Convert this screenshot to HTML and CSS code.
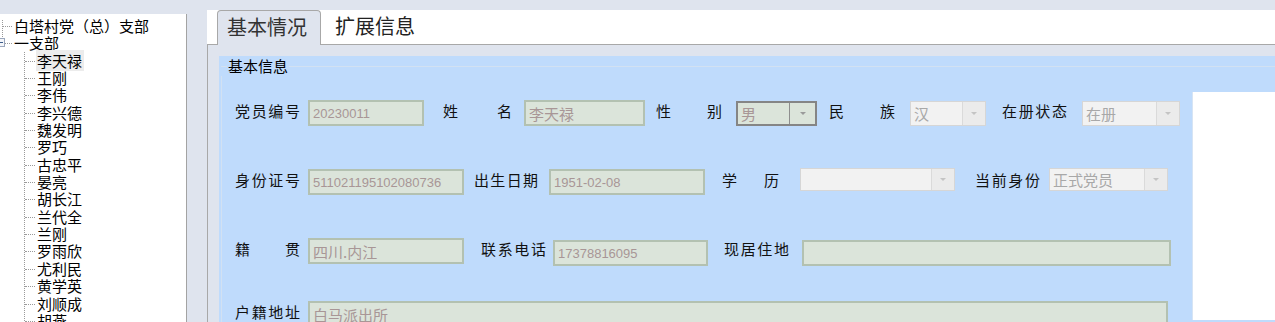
FILE: index.html
```html
<!DOCTYPE html>
<html lang="zh-CN">
<head>
<meta charset="utf-8">
<title>党员信息</title>
<link rel="stylesheet" href="styles.css">
</head>
<body>
<div class="app">
  <aside class="tree-wrap">
    <div class="tree">
      <div class="root-list">
        <div class="node root">白塔村党（总）支部</div>
        <div class="node root open"><span class="minus"></span>一支部</div>
      </div>
      <div class="children">
        <div class="node child"><span class="sel">李天禄</span></div>
        <div class="node child">王刚</div>
        <div class="node child">李伟</div>
        <div class="node child">李兴德</div>
        <div class="node child">魏发明</div>
        <div class="node child">罗巧</div>
        <div class="node child">古忠平</div>
        <div class="node child">晏亮</div>
        <div class="node child">胡长江</div>
        <div class="node child">兰代全</div>
        <div class="node child">兰刚</div>
        <div class="node child">罗雨欣</div>
        <div class="node child">尤利民</div>
        <div class="node child">黄学英</div>
        <div class="node child">刘顺成</div>
        <div class="node child">胡燕</div>
      </div>
    </div>
  </aside>
  <main class="main">
    <div class="tabs">
      <div class="tab active">基本情况</div>
      <div class="tab">扩展信息</div>
    </div>
    <div class="tab-body">
      <section class="group">
        <div class="group-title"><span class="gline short"></span><span class="gtext">基本信息</span><span class="gline"></span></div>
        <div class="group-body">
          <div class="form">
            <div class="row r1">
              <div class="lbl w65"><span>党</span><span>员</span><span>编</span><span>号</span></div>
              <div class="fld num ml8 w116">20230011</div>
              <div class="lbl w69 ml19"><span>姓</span><span>名</span></div>
              <div class="fld cjk ml12 w121">李天禄</div>
              <div class="lbl w66 ml11"><span>性</span><span>别</span></div>
              <div class="sel-box active ml14 w81"><span class="sv cjk">男</span><span class="btn"><span class="arrow"></span></span></div>
              <div class="lbl w66 ml12"><span>民</span><span>族</span></div>
              <div class="sel-box dis ml15 w76"><span class="sv cjk">汉</span><span class="btn"><span class="arrow"></span></span></div>
              <div class="lbl w65 ml16"><span>在</span><span>册</span><span>状</span><span>态</span></div>
              <div class="sel-box dis ml15 w98"><span class="sv cjk">在册</span><span class="btn"><span class="arrow"></span></span></div>
            </div>
            <div class="row r2">
              <div class="lbl w65"><span>身</span><span>份</span><span>证</span><span>号</span></div>
              <div class="fld num ml8 w156">511021195102080736</div>
              <div class="lbl w64 ml10"><span>出</span><span>生</span><span>日</span><span>期</span></div>
              <div class="fld num ml11 w156">1951-02-08</div>
              <div class="lbl w57 ml17"><span>学</span><span>历</span></div>
              <div class="sel-box dis short ml21 w155"><span class="sv cjk"></span><span class="btn"><span class="arrow"></span></span></div>
              <div class="lbl w65 ml20"><span>当</span><span>前</span><span>身</span><span>份</span></div>
              <div class="sel-box dis short ml9 w119"><span class="sv cjk">正式党员</span><span class="btn"><span class="arrow"></span></span></div>
            </div>
            <div class="row r3">
              <div class="lbl w65"><span>籍</span><span>贯</span></div>
              <div class="fld cjk ml8 w156">四川.内江</div>
              <div class="lbl w65 ml17"><span>联</span><span>系</span><span>电</span><span>话</span></div>
              <div class="fld num ml7 w155">17378816095</div>
              <div class="lbl w65 ml16"><span>现</span><span>居</span><span>住</span><span>地</span></div>
              <div class="fld cjk ml13 w369"></div>
            </div>
            <div class="row r4">
              <div class="lbl w65"><span>户</span><span>籍</span><span>地</span><span>址</span></div>
              <div class="fld cjk ml8 w860">白马派出所</div>
            </div>
          </div>
          <div class="photo"></div>
        </div>
      </section>
    </div>
  </main>
</div>
</body>
</html>
```

FILE: styles.css
```css
html, body {
  margin: 0;
  padding: 0;
}
body {
  width: 1275px;
  height: 322px;
  overflow: hidden;
  background: #dfe4ee;
  font-family: "Noto Sans CJK SC", "Liberation Sans", sans-serif;
  color: #000;
}
.app {
  display: flex;
  height: 322px;
}

/* ---------- tree ---------- */
.tree-wrap {
  flex: none;
  width: 186px;
  margin-top: 14px;
  height: 308px;
  background: #fff;
  border-right: 1px solid #a3a3a3;
  overflow: hidden;
}
.tree {
  padding-top: 3px;
  font-size: 15px;
  line-height: 17.35px;
}
.node {
  position: relative;
  white-space: nowrap;
  height: 17.35px;
}
.root-list {
  position: relative;
}
.root-list::before {
  content: "";
  position: absolute;
  left: 2px;
  top: 3px;
  height: 23px;
  border-left: 1px dotted #9a9a9a;
}
.root {
  padding-left: 14px;
}
.root::before {
  content: "";
  position: absolute;
  left: 3px;
  top: 9px;
  width: 9px;
  border-top: 1px dotted #9a9a9a;
}
.minus {
  position: absolute;
  left: -4px;
  top: 4px;
  width: 9px;
  height: 9px;
  box-sizing: border-box;
  border: 1px solid #9aa6bb;
  background: #f4f6fa;
  z-index: 1;
}
.minus::after {
  content: "";
  position: absolute;
  left: 1px;
  right: 1px;
  top: 3px;
  border-top: 1px solid #3a5a8a;
}
.children {
  margin-left: 24px;
  border-left: 1px dotted #9a9a9a;
  padding-left: 12px;
}
.child::before {
  content: "";
  position: absolute;
  left: -12px;
  top: 9px;
  width: 10px;
  border-top: 1px dotted #9a9a9a;
}
.sel {
  background: #ececec;
  padding: 0 2px 0 1px;
  margin-left: -1px;
}

/* ---------- main ---------- */
.main {
  flex: 1;
  margin-left: 20px;
  margin-top: 10px;
  display: flex;
  flex-direction: column;
  min-width: 0;
}
.tabs {
  height: 37px;
  background: #fff;
  border-bottom: 1px solid #a8a8a8;
  display: flex;
  align-items: flex-end;
  padding-left: 10px;
}
.tab {
  font-size: 20px;
  line-height: 26px;
  height: 34px;
  box-sizing: border-box;
  padding: 3px 0 0 0;
  color: #222;
}
.tab.active {
  width: 104px;
  padding-left: 9px;
  background: #dfe4ee;
  border: 1px solid #a8a8a8;
  border-bottom: none;
  border-radius: 4px 4px 0 0;
  margin-bottom: -1px;
  height: 35px;
  color: #333;
}
.tab + .tab {
  margin-left: 14px;
}
.tab-body {
  flex: 1;
  background: #dfe4ee;
  border-left: 1px solid #a8a8a8;
  padding: 11px 0 0 11px;
  display: flex;
}
.group {
  flex: 1;
  background: #bfdbfc;
  display: flex;
  flex-direction: column;
}
.group-title {
  height: 20px;
  display: flex;
  align-items: center;
}
.gline {
  flex: 1;
  border-top: 1px solid #d2e1f2;
}
.gline.short {
  flex: none;
  width: 6px;
  margin-left: 2px;
}
.gtext {
  font-size: 15px;
  line-height: 20px;
  padding: 0 1px;
}
.group-body {
  flex: 1;
  margin-left: 2px;
  border-left: 1px solid #d2e1f2;
  display: flex;
  align-items: flex-start;
}
.form {
  flex: none;
  width: 945px;
  padding-left: 13px;
  padding-top: 24px;
}
.photo {
  flex: 1;
  margin-left: 12px;
  margin-top: 16px;
  height: 228px;
  background: #fff;
  border-left: 1px solid #d6e4f4;
}

/* ---------- rows ---------- */
.row {
  display: flex;
  align-items: center;
  height: 26px;
}
.r2 { margin-top: 43px; }
.r3 { margin-top: 43px; }
.r4 { margin-top: 37px; }
.r3 .ml7, .r3 .ml13 { margin-top: 4px; }

.lbl {
  flex: none;
  display: flex;
  justify-content: space-between;
  font-size: 15px;
  line-height: 18px;
  padding-bottom: 5px;
  color: #111;
}
.fld {
  flex: none;
  height: 26px;
  box-sizing: border-box;
  background: #dbe4da;
  border: 2px solid #b3c1b1;
  color: #a89696;
  padding-left: 3px;
  white-space: nowrap;
  overflow: hidden;
  display: flex;
  align-items: center;
}
.num {
  font-family: "Liberation Sans", "Noto Sans CJK SC", sans-serif;
  font-size: 13px;
}
.cjk {
  font-size: 15px;
}
.sel-box {
  flex: none;
  height: 25px;
  box-sizing: border-box;
  display: flex;
}
.sel-box.short {
  height: 23px;
  margin-top: -5px;
}
.sv {
  flex: 1;
  display: flex;
  align-items: center;
  padding-left: 3px;
  white-space: nowrap;
}
.btn {
  flex: none;
  width: 22px;
  display: flex;
  align-items: center;
  justify-content: center;
}
.arrow {
  width: 0;
  height: 0;
  border-left: 3px solid transparent;
  border-right: 3px solid transparent;
  border-top: 3px solid #a0a0a0;
}
.sel-box.active {
  background: #dbe4da;
  border: 2px solid #858585;
  color: #a89696;
}
.sel-box.active .btn {
  width: 25px;
  border-left: 1px solid #8e8e8e;
}
.sel-box.active .arrow {
  border-top-color: #9a9a9a;
}
.sel-box.dis {
  background: #f2f2f2;
  border: 1px solid #d6d6d6;
  color: #a8a8a8;
}
.sel-box.dis .btn {
  background: #ebebeb;
  border-left: 1px solid #dadada;
}
.sel-box.dis .arrow {
  border-top-color: #c4c4c4;
}

/* widths and gaps */
.w57 { width: 57px; }
.w64 { width: 64px; }
.w65 { width: 65px; }
.w66 { width: 66px; }
.w69 { width: 69px; }
.w76 { width: 76px; }
.w81 { width: 81px; }
.w98 { width: 98px; }
.w116 { width: 116px; }
.w119 { width: 119px; }
.w121 { width: 121px; }
.w155 { width: 155px; }
.w156 { width: 156px; }
.w369 { width: 369px; }
.w860 { width: 860px; }
.ml7 { margin-left: 7px; }
.ml8 { margin-left: 8px; }
.ml9 { margin-left: 9px; }
.ml10 { margin-left: 10px; }
.ml11 { margin-left: 11px; }
.ml12 { margin-left: 12px; }
.ml13 { margin-left: 13px; }
.ml14 { margin-left: 14px; }
.ml15 { margin-left: 15px; }
.ml16 { margin-left: 16px; }
.ml17 { margin-left: 17px; }
.ml19 { margin-left: 19px; }
.ml20 { margin-left: 20px; }
.ml21 { margin-left: 21px; }
```
